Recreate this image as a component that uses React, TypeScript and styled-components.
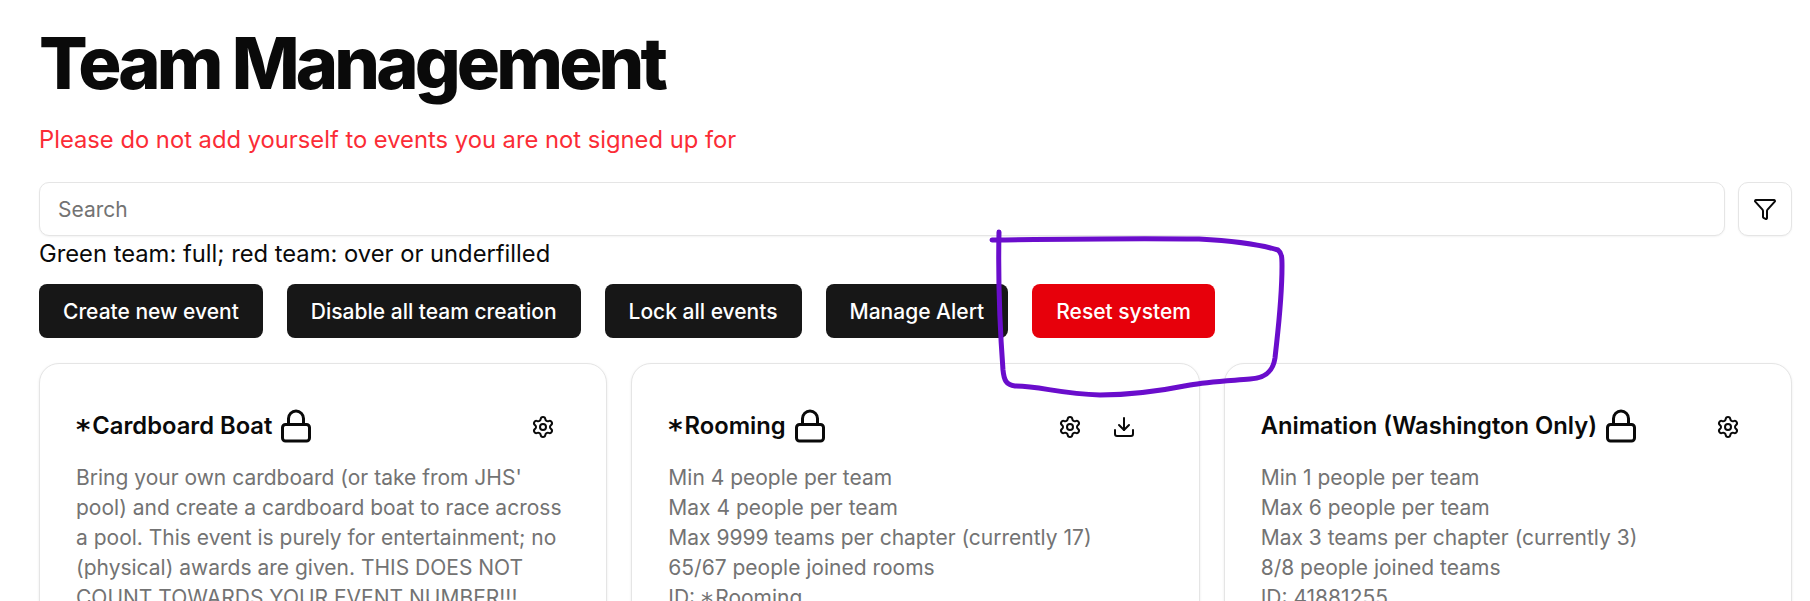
import React from "react";
import styled, { createGlobalStyle } from "styled-components";
import { Download, Funnel, Lock, Settings } from "lucide-react";

const GlobalStyle = createGlobalStyle`
  html, body {
    margin: 0;
    height: 100%;
    overflow: hidden;
    background: #fff;
    font-family: Inter, "Liberation Sans", sans-serif;
    color: #0a0a0a;
  }
  * {
    box-sizing: border-box;
  }
`;

const Page = styled.main`
  position: relative;
  padding: 18px 18px 0 39px;
`;

const Title = styled.h1`
  margin: 0;
  font-size: 72px;
  line-height: 90px;
  font-weight: 800;
  letter-spacing: -3.85px;
`;

const Warning = styled.p`
  margin: 14px 0 0;
  font-size: 23.75px;
  line-height: 36px;
  color: #fb2c36;
`;

const SearchRow = styled.div`
  display: flex;
  gap: 13px;
  margin-top: 24px;
`;

const SearchInput = styled.input`
  flex: 1;
  height: 54px;
  padding: 0 18px;
  border: 1px solid #e5e5e5;
  border-radius: 10px;
  box-shadow: 0 1px 2px rgba(0, 0, 0, 0.05);
  font: inherit;
  font-size: 21px;
  outline: none;

  &::placeholder {
    color: #737373;
  }
`;

const FilterButton = styled.button`
  display: flex;
  align-items: center;
  justify-content: center;
  width: 54px;
  height: 54px;
  padding: 0;
  background: #fff;
  border: 1px solid #e5e5e5;
  border-radius: 10px;
  box-shadow: 0 1px 2px rgba(0, 0, 0, 0.05);
  color: #0a0a0a;
`;

const Legend = styled.div`
  padding-top: 3px;
  font-size: 23.75px;
  line-height: 30px;
`;

const Toolbar = styled.div`
  display: flex;
  gap: 24px;
  margin-top: 15px;
`;

const ActionButton = styled.button<{ $danger?: boolean }>`
  height: 54px;
  padding: 0 24px;
  border: 0;
  border-radius: 8px;
  background: ${p => (p.$danger ? "#e7000b" : "#171717")};
  color: #fff;
  font: inherit;
  font-size: 21px;
  font-weight: 500;
`;

const CardGrid = styled.section`
  display: grid;
  grid-template-columns: repeat(3, 1fr);
  gap: 24px;
  margin-top: 25px;
`;

const Card = styled.article`
  padding: 44px 36px 36px;
  border: 1px solid #e5e5e5;
  border-radius: 20px;
  box-shadow: 0 1px 3px rgba(0, 0, 0, 0.08);
  background: #fff;
`;

const CardHeader = styled.header`
  display: flex;
  align-items: center;
  justify-content: space-between;
  height: 36px;
`;

const CardTitle = styled.h2`
  display: flex;
  align-items: center;
  gap: 6px;
  margin: 0;
  font-size: 23.75px;
  font-weight: 600;
  color: #0a0a0a;
`;

const CardName = styled.span`
  margin-bottom: 2px;
`;

// the asterisk in the original font sits low and centred
const Star = styled.span`
  margin-right: 2px;
  font-family: "DejaVu Sans", sans-serif;
  font-size: 1.15em;
  line-height: 0;
  vertical-align: -0.2em;
`;

const CardActions = styled.div<{ $inset?: boolean }>`
  display: flex;
  margin-right: ${p => (p.$inset ? "12px" : "0")};
`;

const IconButton = styled.button`
  display: flex;
  align-items: center;
  justify-content: center;
  width: 54px;
  height: 36px;
  padding: 2px 0 0;
  border: 0;
  background: none;
  color: #0a0a0a;
`;

const CardBody = styled.div`
  margin-top: 19px;
  font-size: 21px;
  line-height: 30px;
  color: #737373;
`;

const Scribble = styled.svg`
  position: absolute;
  top: 0;
  left: 0;
  width: 1810px;
  height: 601px;
  pointer-events: none;
`;

const withStar = (text: string) => {
  const [before, after] = text.split("*");
  if (after === undefined) return text;
  return (
    <>
      {before}
      <Star>*</Star>
      {after}
    </>
  );
};

const events = [
  {
    name: "*Cardboard Boat",
    lines: ["Bring your own cardboard (or take from JHS' pool) and create a cardboard boat to race across a pool. This event is purely for entertainment; no (physical) awards are given. THIS DOES NOT COUNT TOWARDS YOUR EVENT NUMBER!!!"],
  },
  {
    name: "*Rooming",
    download: true,
    lines: ["Min 4 people per team", "Max 4 people per team", "Max 9999 teams per chapter (currently 17)", "65/67 people joined rooms", "ID: *Rooming"],
  },
  {
    name: "Animation (Washington Only)",
    lines: ["Min 1 people per team", "Max 6 people per team", "Max 3 teams per chapter (currently 3)", "8/8 people joined teams", "ID: 41881255"],
  },
];

const App: React.FC = () => (
  <Page>
    <GlobalStyle />
    <Title>Team Management</Title>
    <Warning>Please do not add yourself to events you are not signed up for</Warning>
    <SearchRow>
      <SearchInput placeholder="Search" />
      <FilterButton>
        <Funnel size={24} />
      </FilterButton>
    </SearchRow>
    <Legend>Green team: full; red team: over or underfilled</Legend>
    <Toolbar>
      <ActionButton>Create new event</ActionButton>
      <ActionButton>Disable all team creation</ActionButton>
      <ActionButton>Lock all events</ActionButton>
      <ActionButton>Manage Alert</ActionButton>
      <ActionButton $danger>Reset system</ActionButton>
    </Toolbar>
    <CardGrid>
      {events.map(event => (
        <Card key={event.name}>
          <CardHeader>
            <CardTitle>
              <CardName>{withStar(event.name)}</CardName>
              <Lock size={36} />
            </CardTitle>
            <CardActions $inset={event.download}>
              <IconButton>
                <Settings size={24} />
              </IconButton>
              {event.download && (
                <IconButton>
                  <Download size={24} />
                </IconButton>
              )}
            </CardActions>
          </CardHeader>
          <CardBody>
            {event.lines.map(line => (
              <div key={line}>{withStar(line)}</div>
            ))}
          </CardBody>
        </Card>
      ))}
    </CardGrid>
    <Scribble viewBox="0 0 1810 601" fill="none">
      <path
        d="M992 240 C1060 239 1130 238 1199 239 C1235 241 1262 245 1278 250 C1282 253 1282 258 1282 266 C1282 300 1278 330 1275 358 C1273 372 1265 378 1250 379 C1225 381 1205 382 1190 385 C1165 390 1135 395 1100 395 C1060 394 1040 386 1015 386 C1006 385 1004 380 1003 370 C1000 330 998 280 999 232"
        stroke="#6a0dcc"
        strokeWidth="5"
        strokeLinecap="round"
        strokeLinejoin="round"
      />
    </Scribble>
  </Page>
);

export default App;
